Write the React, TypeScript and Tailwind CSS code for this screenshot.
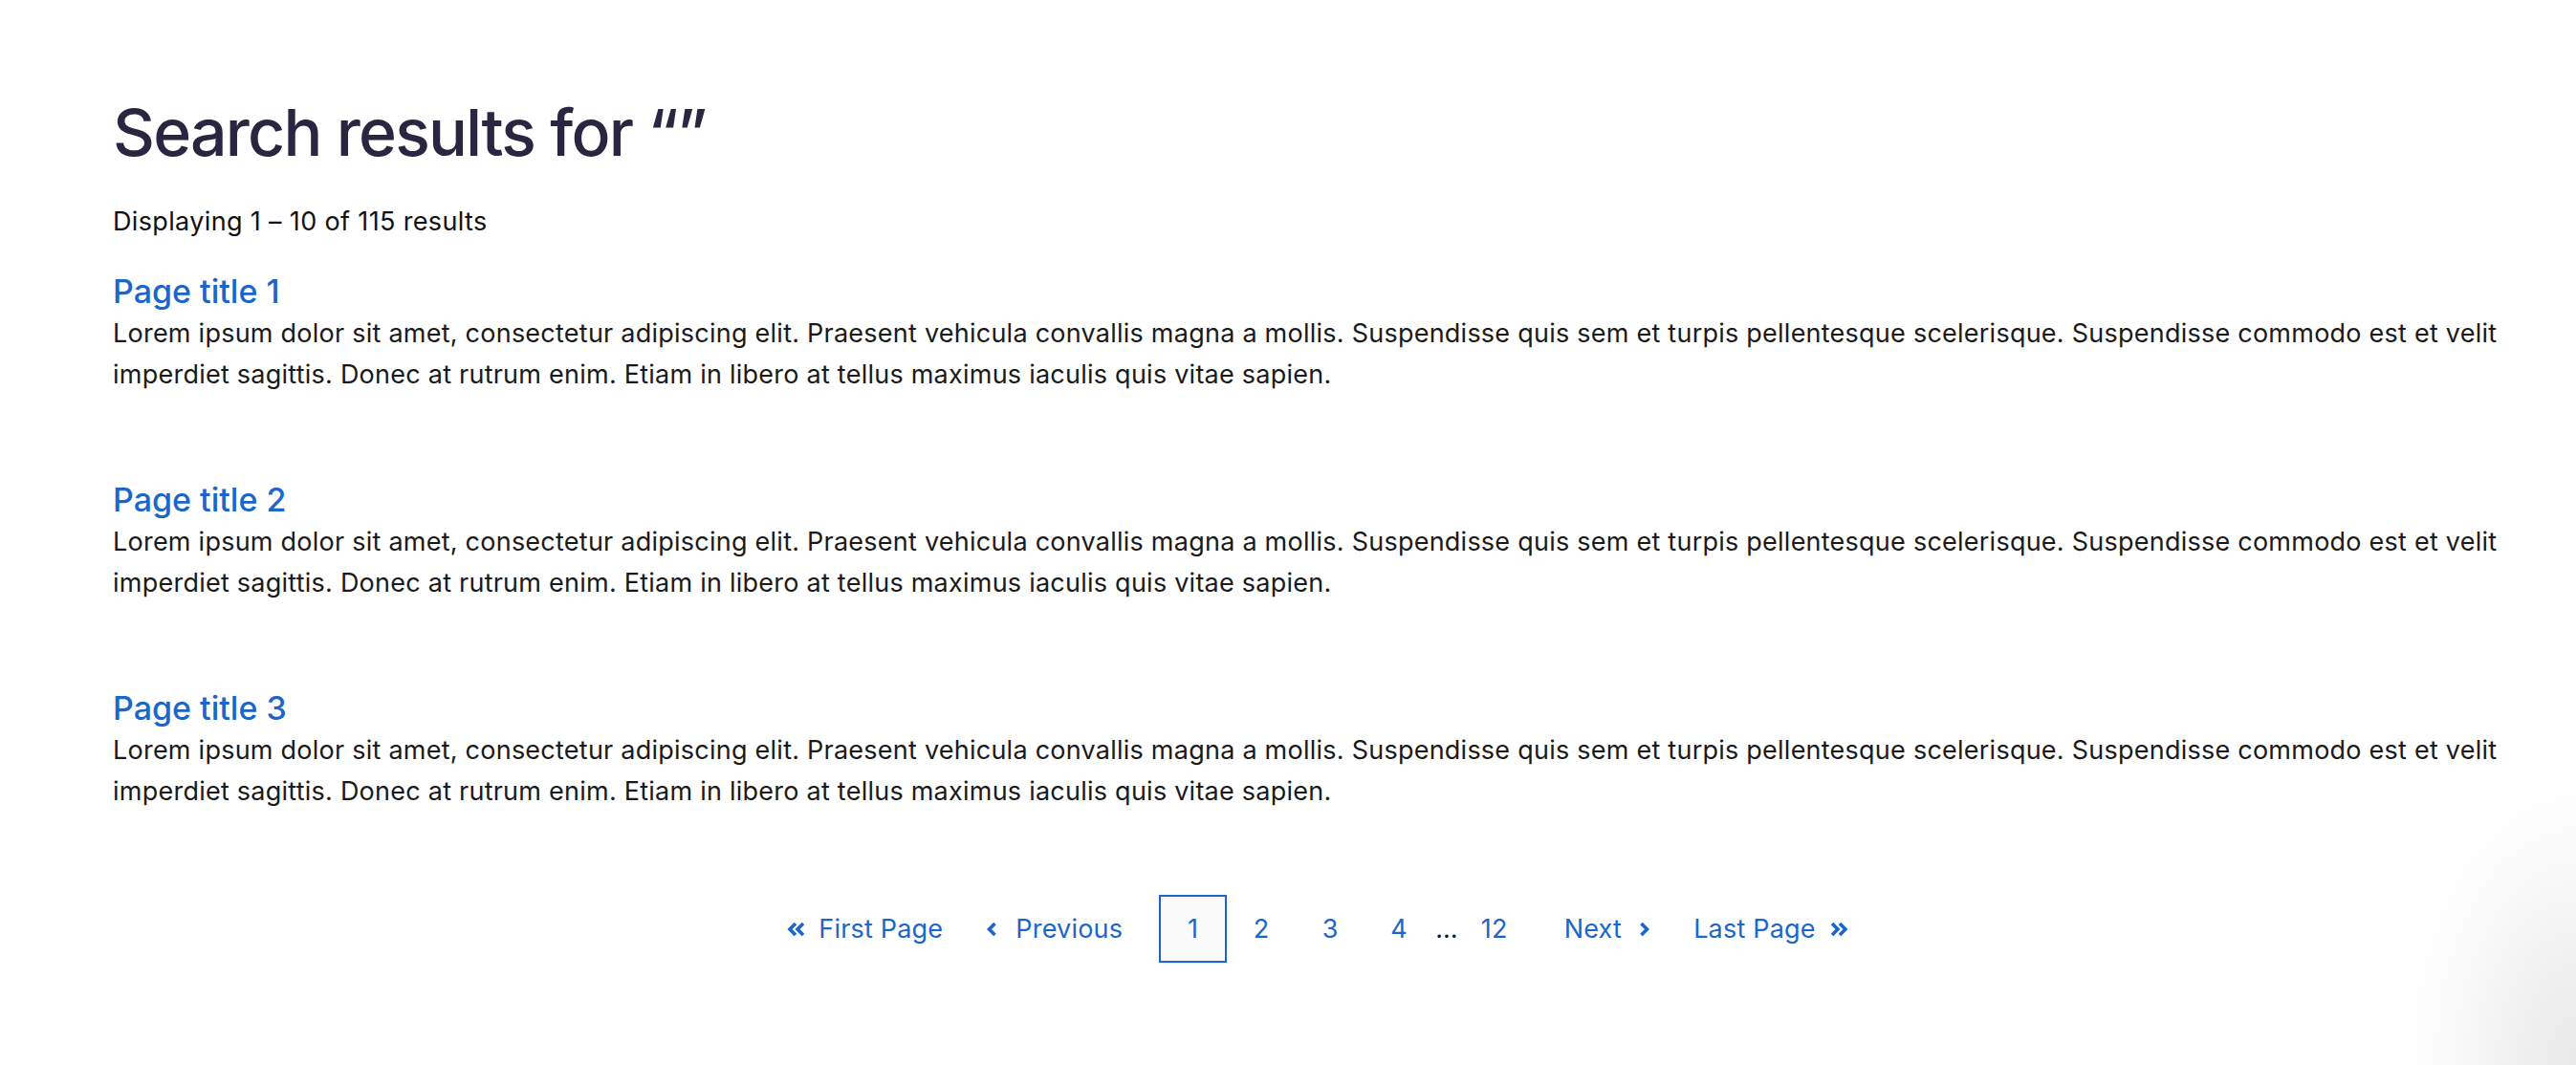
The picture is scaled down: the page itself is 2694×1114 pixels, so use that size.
import React from "react";

const body =
  "Lorem ipsum dolor sit amet, consectetur adipiscing elit. Praesent vehicula convallis magna a mollis. Suspendisse quis sem et turpis pellentesque scelerisque. Suspendisse commodo est et velit imperdiet sagittis. Donec at rutrum enim. Etiam in libero at tellus maximus iaculis quis vitae sapien.";

function DoubleChevron({ dir }: { dir: "left" | "right" }) {
  const d =
    dir === "left"
      ? ["M10 2 L4 8 L10 14", "M18 2 L12 8 L18 14"]
      : ["M3 2 L9 8 L3 14", "M11 2 L17 8 L11 14"];
  return (
    <svg width="21" height="16" viewBox="0 0 21 16" fill="none" stroke="currentColor" strokeWidth="3.6" strokeLinejoin="miter">
      {d.map((p) => (
        <path key={p} d={p} />
      ))}
    </svg>
  );
}

function Chevron({ dir }: { dir: "left" | "right" }) {
  return (
    <svg width="11" height="16" viewBox="0 0 11 16" fill="none" stroke="currentColor" strokeWidth="3.6" strokeLinejoin="miter">
      <path d={dir === "left" ? "M8.5 2 L2.5 8 L8.5 14" : "M2.5 2 L8.5 8 L2.5 14"} />
    </svg>
  );
}

export default function App() {
  return (
    <div
      className="relative min-h-[1114px] w-full overflow-hidden bg-white"
      style={{ fontFamily: "Inter, 'Noto Sans', sans-serif" }}
    >
      <div className="pl-[118px] pr-[56px] pt-[98px]">
        <h1 className="text-[68px] leading-[80px] font-medium tracking-[-1.8px] text-[#2a2540]">
          Search results for “”
        </h1>
        <p className="mt-[32px] text-[27px] leading-[43px] tracking-[0.35px] text-[#111111]">
          Displaying 1 – 10 of 115 results
        </p>
        <div className="mt-[29px] flex flex-col gap-[87px]">
          {[1, 2, 3].map((n) => (
            <div key={n}>
              <a className="block text-[34px] leading-[45px] font-medium text-[#1b66c9]">Page title {n}</a>
              <p className="text-[27px] leading-[43px] tracking-[0.24px] text-[#1a1a1a]">{body}</p>
            </div>
          ))}
        </div>
        <nav className="mt-[87px] flex items-center justify-center pr-[0px] pl-[0px] text-[27px] leading-[43px] tracking-[0.2px] text-[#1b66c9]">
          <a className="flex items-center gap-[13px]">
            <DoubleChevron dir="left" />
            <span>First Page</span>
          </a>
          <a className="ml-[46px] flex items-center gap-[19px]">
            <Chevron dir="left" />
            <span>Previous</span>
          </a>
          <div className="ml-[38px] flex items-center">
            <span className="flex h-[71px] w-[71px] items-center justify-center border-2 border-[#1b66c9] bg-[#fafafa]">1</span>
            <a className="flex h-[71px] w-[72px] items-center justify-center">2</a>
            <a className="flex h-[71px] w-[72px] items-center justify-center">3</a>
            <a className="flex h-[71px] w-[72px] items-center justify-center">4</a>
            <span className="px-[2px] text-[#1a1a1a]">…</span>
            <a className="flex h-[71px] w-[72px] items-center justify-center">12</a>
          </div>
          <a className="ml-[37px] flex items-center gap-[18px]">
            <span>Next</span>
            <Chevron dir="right" />
          </a>
          <a className="ml-[46px] flex items-center gap-[14px]">
            <span>Last Page</span>
            <DoubleChevron dir="right" />
          </a>
        </nav>
      </div>
      <div className="pointer-events-none absolute bottom-0 right-0 h-[300px] w-[180px] bg-[radial-gradient(ellipse_at_bottom_right,rgba(0,0,0,0.09),rgba(0,0,0,0)_70%)]" />
    </div>
  );
}
